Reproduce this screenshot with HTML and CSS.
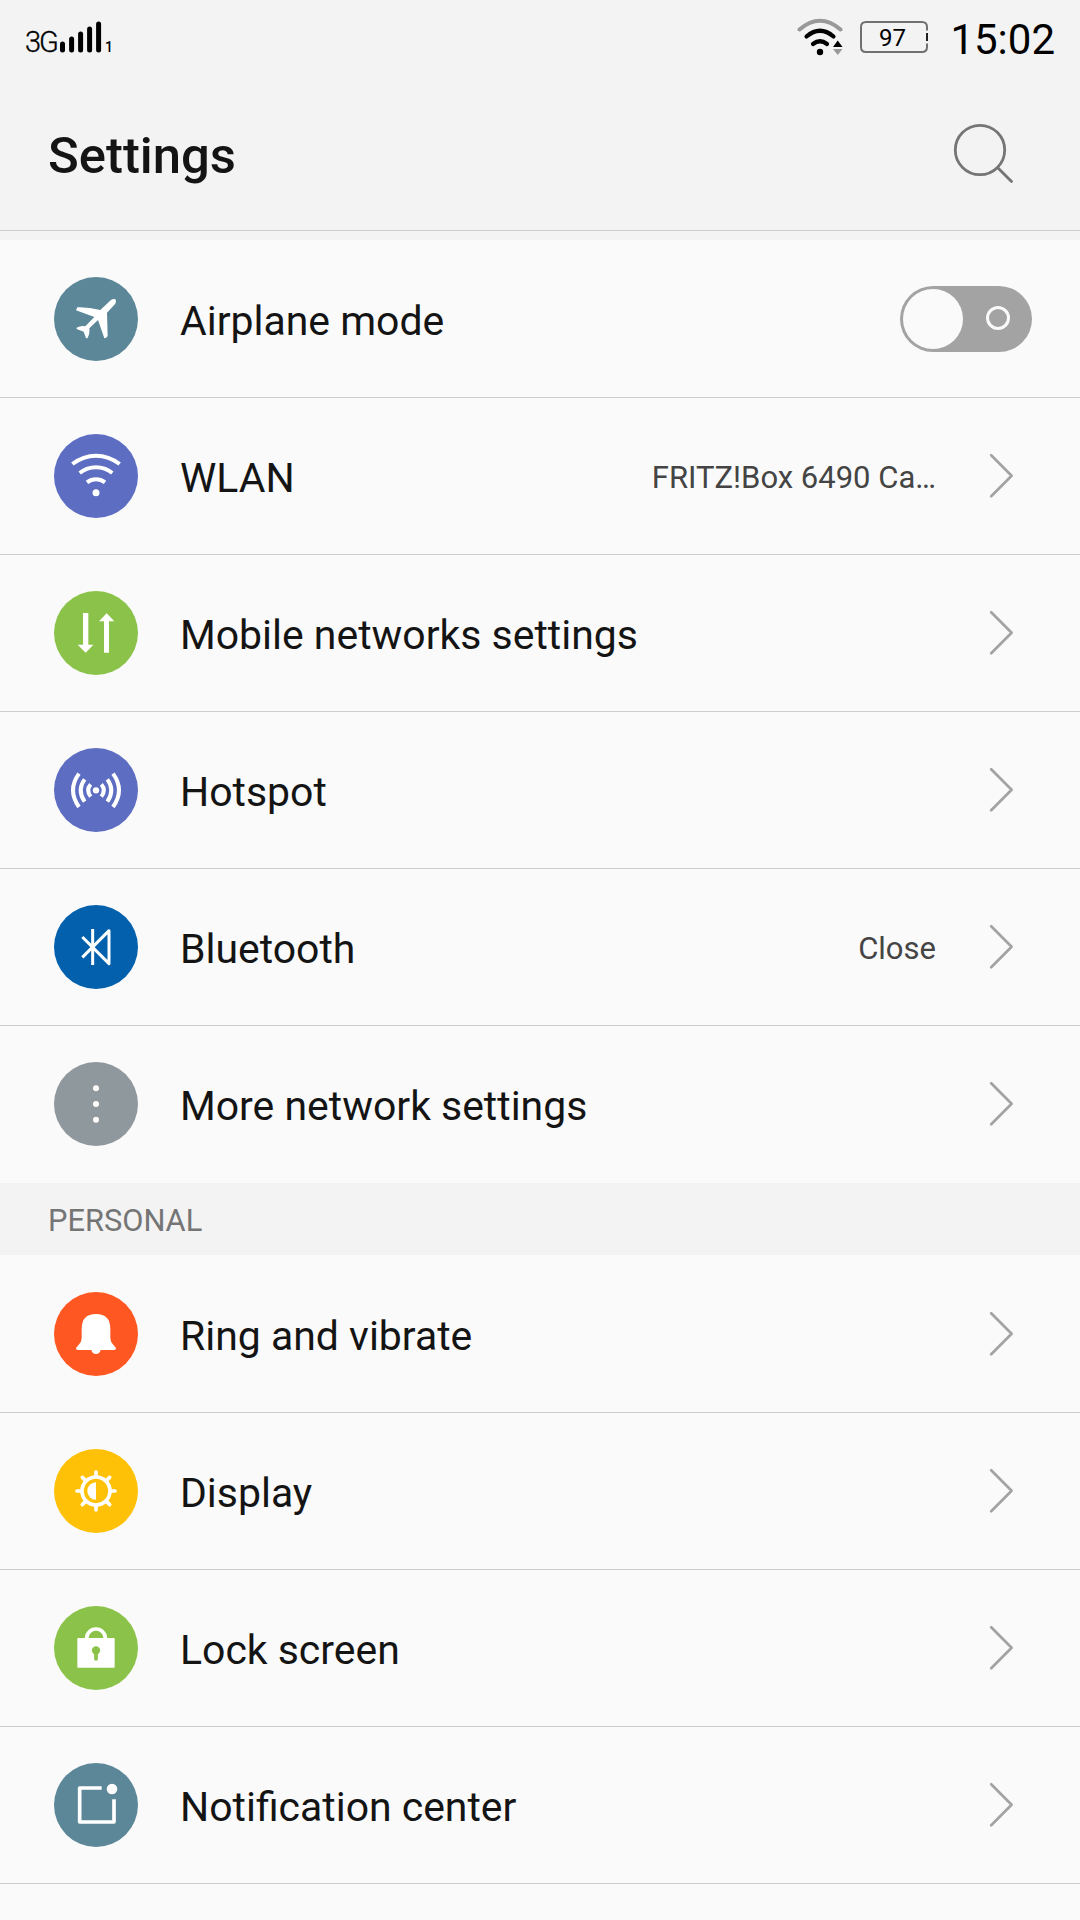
FILE: index.html
```html
<!DOCTYPE html>
<html lang="en">
<head>
<meta charset="utf-8">
<title>Settings</title>
<link rel="stylesheet" href="styles.css">
</head>
<body>
<svg class="defs" aria-hidden="true">
  <symbol id="chevron" viewBox="0 0 26 46"><path d="M3.2 2.2 23.6 22.7 3.2 43.2" fill="none" stroke="#a3a3a3" stroke-width="2.7" stroke-linecap="round" stroke-linejoin="round"/></symbol>
</svg>

<div class="status">
  <div class="network">
    <span class="net-type">3G</span>
    <svg class="bars" width="42" height="32" viewBox="0 0 42 32"><path d="M2.5 23v6M11.6 18v11M20.6 13v16M29.6 8v21M38.6 3v26" stroke="#000" stroke-width="5" stroke-linecap="round"/></svg>
    <span class="sim">1</span>
  </div>
  <svg class="wifi" width="48" height="38" viewBox="0 0 48 38" fill="none" stroke-linecap="round">
    <path d="M3.500 11.500Q24 -6 44.500 11.500" stroke="#999" stroke-width="4"/>
    <path d="M10.500 18.500Q24 7 37.500 18.500M17 26Q24 20.500 31 26" stroke="#000" stroke-width="4.200"/>
    <circle cx="24" cy="34" r="3.200" fill="#000"/>
    <path d="M37 29h9.500l-4.750-6.500z" fill="#000"/>
    <path d="M37 31h9.500l-4.750 6z" fill="#999"/>
  </svg>
  <div class="battery">
    <svg width="68" height="32" viewBox="0 0 68 32" fill="none" stroke="#707070" stroke-width="2"><path d="M67 9.500V6q0-5-5-5H6Q1 1 1 6v20q0 5 5 5h56q5 0 5-5v-3.500"/><path d="M67 12v8" stroke="#222"/></svg>
    <span class="level">97</span>
  </div>
  <span class="clock">15:02</span>
</div>

<header class="header">
  <h1>Settings</h1>
  <svg class="search" width="62" height="62" viewBox="0 0 62 62" fill="none" stroke="#757575" stroke-width="2.800" stroke-linecap="round"><circle cx="27" cy="27" r="24.700"/><path d="M45 45 58.500 58.500"/></svg>
</header>

<main>
  <section class="group">
    <div class="row">
      <svg class="icon slate" viewBox="42 51 252 252"><path fill="#fff" d="M212 121Q220 115 226 118Q230 122 226 131L201 158L203 228Q199 235 193 235L174 180L148 205Q150 222 142 235H138L131 215L110 207V203Q122 196 136 199L163 171L108 151L112 142Q146 141 181 150Z"/></svg>
      <span class="label">Airplane mode</span>
      <span class="toggle"><span class="thumb"></span><span class="ring"></span></span>
    </div>
    <div class="row">
      <svg class="icon indigo" viewBox="42 522 252 252"><g fill="none" stroke="#fff" stroke-width="12"><path d="M97 612Q130 587 168 587T239 612M119 639Q141 622 168 622T217 639M141 667Q153 658 168 658T195 667"/></g><circle cx="168" cy="698" r="10.500" fill="#fff"/></svg>
      <span class="label">WLAN</span>
      <span class="value">FRITZ!Box 6490 Ca…</span>
      <svg class="chevron"><use href="#chevron"/></svg>
    </div>
    <div class="row">
      <svg class="icon green" viewBox="42 63 252 252"><path fill="#fff" d="M129 129h16v95h15l-23 24-24-24h16zM192 248v-94h-15l23-24 23 24h-16v94z"/></svg>
      <span class="label">Mobile networks settings</span>
      <svg class="chevron"><use href="#chevron"/></svg>
    </div>
    <div class="row">
      <svg class="icon indigo" viewBox="42 534 252 252"><g fill="none" stroke="#fff" stroke-width="12"><path d="M117 611Q81 660 117 711M134 628Q110 660 134 695M152 643Q137 660 152 680M219 611Q255 660 219 711M202 628Q226 660 202 695M184 643Q199 660 184 680"/></g><circle cx="168" cy="661" r="9.500" fill="#fff"/></svg>
      <span class="label">Hotspot</span>
      <svg class="chevron"><use href="#chevron"/></svg>
    </div>
    <div class="row">
      <svg class="icon blue" viewBox="42 45 252 252"><path fill="none" stroke="#fff" stroke-width="9" stroke-linejoin="round" d="M158 117v108M127 141l80 80V122l-80 80"/></svg>
      <span class="label">Bluetooth</span>
      <span class="value">Close</span>
      <svg class="chevron"><use href="#chevron"/></svg>
    </div>
    <div class="row">
      <svg class="icon gray" viewBox="42 516 252 252" fill="#fff"><circle cx="168" cy="595" r="9"/><circle cx="168" cy="642" r="9"/><circle cx="168" cy="689" r="9"/></svg>
      <span class="label">More network settings</span>
      <svg class="chevron"><use href="#chevron"/></svg>
    </div>
  </section>

  <h2>PERSONAL</h2>

  <section class="group">
    <div class="row">
      <svg class="icon orange" viewBox="162 366 252 252"><path fill="#fff" d="M245 476q0-44 43-44t43 44v28q0 12 10 22l7 8q1 6-6 6h-40q-3 12-14 12t-14-12h-40q-7 0-6-6l7-8q10-10 10-22z"/></svg>
      <span class="label">Ring and vibrate</span>
      <svg class="chevron"><use href="#chevron"/></svg>
    </div>
    <div class="row">
      <svg class="icon amber" viewBox="42 57 252 252"><g fill="none" stroke="#fff" stroke-width="11" stroke-linecap="round"><circle cx="168" cy="183" r="42"/><path d="M168 126v12M168 228v12M111 183h12M213 183h12M127 142l9 9M200 215l9 9M127 224l9-9M200 151l9-9"/></g><path fill="#fff" d="M168 157a26 26 0 0 0 0 52z"/></svg>
      <span class="label">Display</span>
      <svg class="chevron"><use href="#chevron"/></svg>
    </div>
    <div class="row">
      <svg class="icon green" viewBox="42 528 252 252"><path fill="none" stroke="#fff" stroke-width="11" d="M140 628v-3a28 28 0 0 1 56 0v3"/><rect x="112" y="624" width="112" height="89" rx="3" fill="#fff"/><circle cx="168" cy="661" r="12.500" fill="#8bc34a"/><path d="M168 665v22" stroke="#8bc34a" stroke-width="11" stroke-linecap="round"/></svg>
      <span class="label">Lock screen</span>
      <svg class="chevron"><use href="#chevron"/></svg>
    </div>
    <div class="row">
      <svg class="icon slate" viewBox="162 69 252 252"><path fill="none" stroke="#fff" stroke-width="11" stroke-linejoin="round" d="M305 144h-66v102h103v-68"/><circle cx="336" cy="147" r="16" fill="#fff"/></svg>
      <span class="label">Notification center</span>
      <svg class="chevron"><use href="#chevron"/></svg>
    </div>
    <div class="row cut"></div>
  </section>
</main>
</body>
</html>
```

FILE: styles.css
```css
* { box-sizing: border-box; }

body {
  margin: 0;
  height: 1920px;
  background: #f3f3f3;
  color: #141414;
  font-family: Roboto, sans-serif;
}

.defs { display: none; }
svg { display: block; flex: none; }

.status {
  display: flex;
  align-items: flex-start;
  height: 80px;
  padding: 0 25px 0 25px;
  color: #000;
}

.network {
  display: flex;
  align-items: flex-end;
  height: 53px;
  flex: 1;
}

.net-type {
  width: 35px;
  font-size: 29px;
  font-weight: 300;
  line-height: 35px;
  letter-spacing: -2px;
  margin-bottom: -7px;
  -webkit-text-stroke: 0.3px #000;
}

.sim {
  margin-left: 3px;
  font-size: 14px;
  font-weight: 500;
  line-height: 14px;
  margin-bottom: -1px;
}

.wifi { margin: 18px 16px 0 0; }

.battery {
  display: grid;
  width: 68px;
  margin-top: 21px;
}

.battery > * { grid-area: 1 / 1; }

.level {
  font-size: 24px;
  line-height: 34px;
  height: 32px;
  padding-left: 18.5px;
}

.clock {
  margin-left: 22px;
  font-size: 42px;
  line-height: 50px;
  margin-top: 15px;
}

.header {
  display: flex;
  justify-content: space-between;
  align-items: flex-start;
  height: 151px;
  padding: 43px 65px 0 48px;
  border-bottom: 1px solid #cdcdcd;
}

h1 {
  margin: 1px 0 0;
  font-size: 50.8px;
  font-weight: 500;
  line-height: 64px;
}

main { padding-top: 9px; }

.group { background: #fafafa; }
.group:first-child { padding-bottom: 1px; }

.row {
  display: flex;
  align-items: center;
  height: 157px;
  padding: 0 48px 0 54px;
  border-top: 1px solid #cdcdcd;
}

.row:first-child { border-top-color: transparent; }
.row.cut { height: 37px; }

.icon {
  width: 84px;
  height: 84px;
  border-radius: 50%;
}

.slate { background: #5c8799; }
.indigo { background: #5c6dc2; }
.green { background: #8bc34a; }
.blue { background: #0360ac; }
.gray { background: #8e989d; }
.orange { background: #ff5722; }
.amber { background: #ffc107; }

.label {
  flex: 1;
  margin-left: 42px;
  padding-top: 3px;
  font-size: 40.95px;
  white-space: nowrap;
}

.value {
  padding-top: 2px;
  margin-right: 52px;
  color: #444;
  font-size: 31px;
}

.chevron {
  width: 26px;
  height: 46px;
  margin-right: 18px;
}

.toggle {
  display: flex;
  align-items: center;
  justify-content: space-between;
  width: 132px;
  height: 66px;
  padding: 0 22px 0 3px;
  border-radius: 33px;
  background: #a3a3a3;
}

.thumb {
  width: 60px;
  height: 60px;
  border-radius: 50%;
  background: #fafafa;
}

.ring {
  width: 24px;
  height: 24px;
  margin-bottom: 2px;
  border: 3px solid #fafafa;
  border-radius: 50%;
}

h2 {
  margin: 0;
  height: 72px;
  padding: 2px 48px 0;
  color: #757575;
  font-size: 30.8px;
  font-weight: 400;
  line-height: 72px;
}
```
